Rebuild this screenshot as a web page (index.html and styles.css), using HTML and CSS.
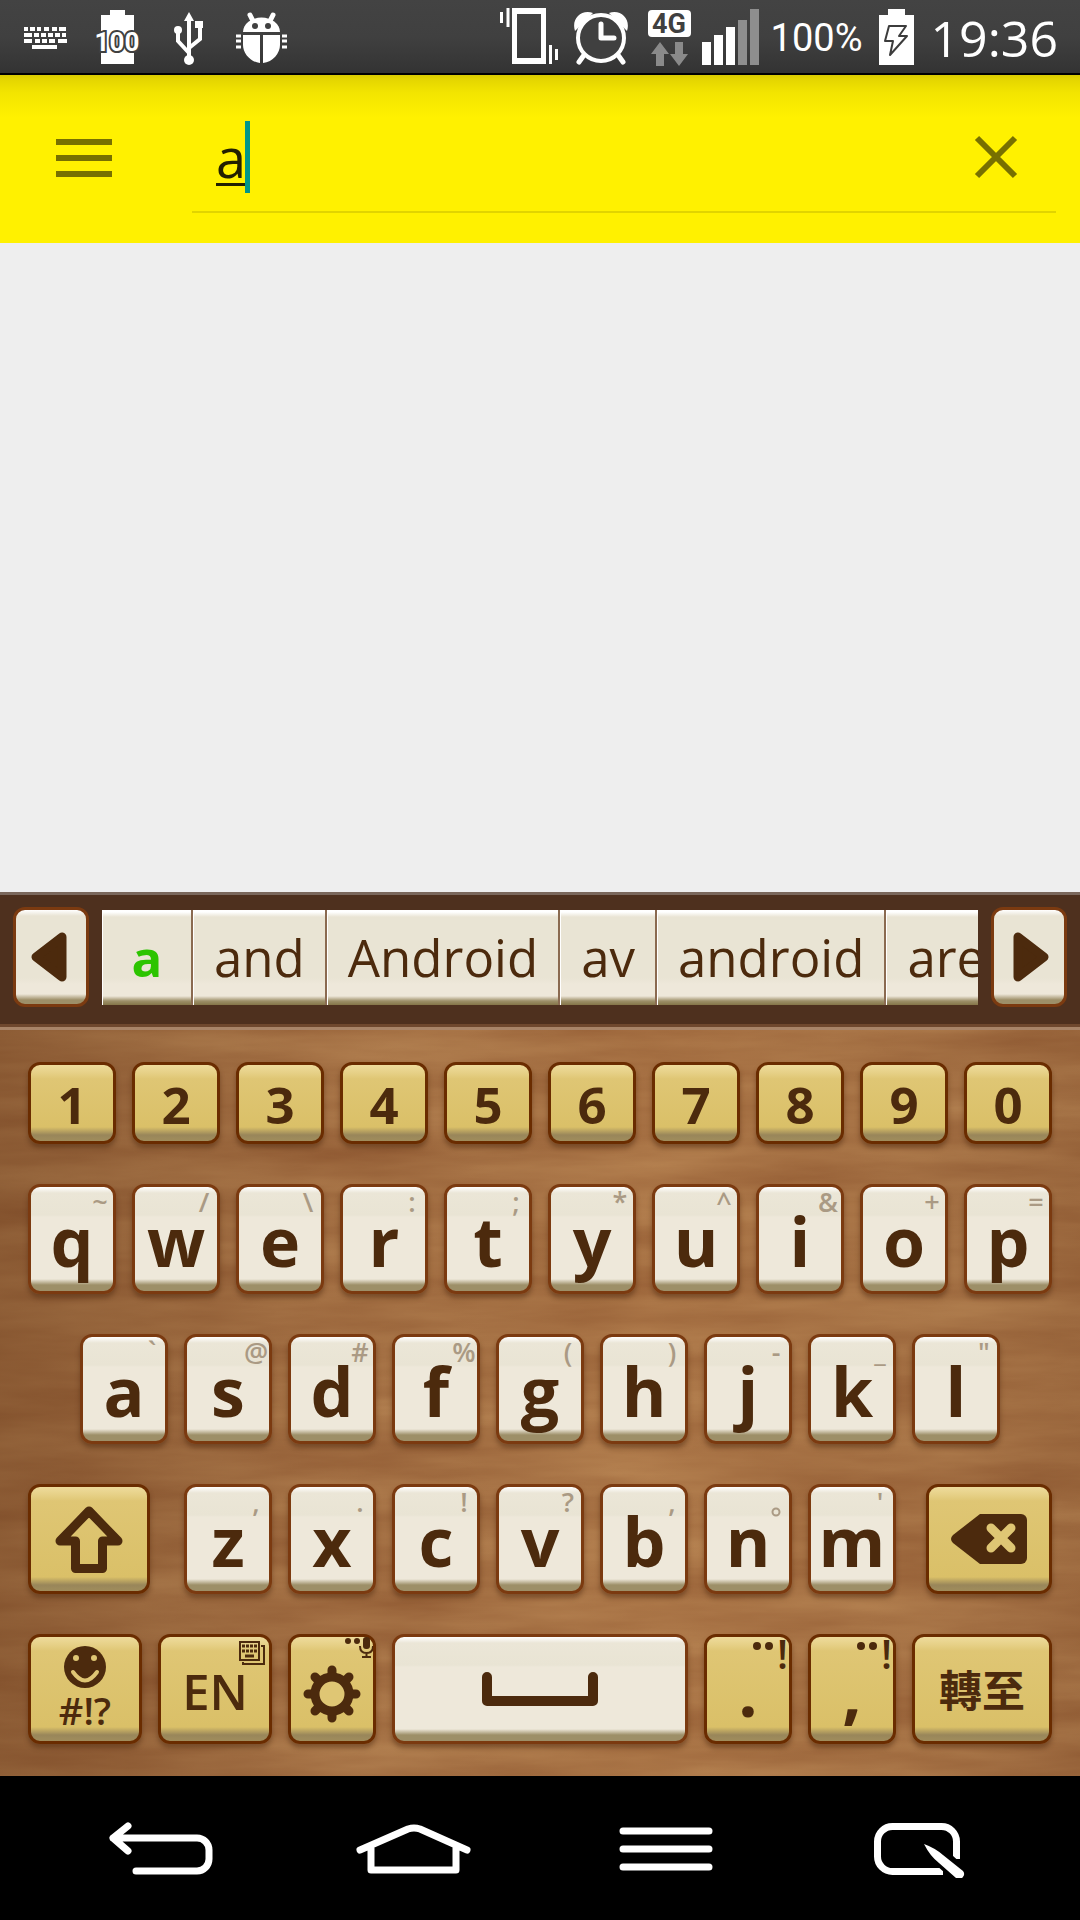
FILE: index.html
```html
<!DOCTYPE html>
<html lang="en">
<head>
<meta charset="utf-8">
<meta name="viewport" content="width=device-width, initial-scale=1">
<title>Search</title>
<link rel="stylesheet" href="styles.css">
</head>
<body>
<div class="status">
  <div class="status-left">
    <svg width="72" height="73" viewBox="0 0 72 73" fill="none" stroke="#fff" stroke-width="4" aria-hidden="true">
      <path d="M15 29h4m2 0h5m2 0h4m3 0h5m3 0h5m2 0h7M15 35h8m2 0h5m2 0h5m2 0h5m2 0h5m2 0h4M15 41h8m3 0h5m2 0h5m2 0h6m3 0h9M23 47h25"/>
    </svg>
    <svg width="72" height="73" viewBox="0 0 72 73" aria-hidden="true">
      <path d="M20 15h9v-5h15v5h9v49H20z" fill="#fff"/>
      <text x="36" y="51" class="battery-level">100</text>
    </svg>
    <svg width="72" height="73" viewBox="0 0 72 73" aria-hidden="true">
      <path d="M36 20v40M25 31v10l11 12M47 26v13L36 48" fill="none" stroke="#fff" stroke-width="4"/>
      <path d="M36 12l5 9H31z M42 21h8v7h-8z" fill="#fff"/>
      <circle cx="25" cy="30" r="4" fill="#fff"/><circle cx="36" cy="60" r="5" fill="#fff"/>
    </svg>
    <svg width="72" height="73" viewBox="0 0 72 73" aria-hidden="true">
      <path d="M25 15l4 8M48 15l-4 8" stroke="#fff" stroke-width="5" stroke-linecap="round"/>
      <path d="M18 32a18 14 0 0 1 37 0z" fill="#fff"/>
      <circle cx="30" cy="26" r="3" fill="#404040"/><circle cx="43" cy="26" r="3" fill="#404040"/>
      <path d="M18 35h17v28C25 62 18 53 18 45zM38 35h17v10c0 8-7 17-17 18z" fill="#fff"/>
      <path d="M11 36h5m-5 5h5m-5 6h5M57 36h5m-5 5h5m-5 6h5" stroke="#fff" stroke-width="3"/>
    </svg>
  </div>
  <div class="status-right">
    <svg width="64" height="73" viewBox="0 0 64 73" fill="none" stroke="#fff" aria-hidden="true">
      <path d="M3.500 12v11M10 8v19M52.500 45v19M58.500 49v11" stroke-width="3"/>
      <path fill="#fff" stroke="none" fill-rule="evenodd" d="M14 8h34v56H14zM19 14v44h24V14z"/>
    </svg>
    <svg width="58" height="73" viewBox="0 0 58 73" fill="none" stroke="#fff" stroke-linecap="round" aria-hidden="true">
      <path d="M12 55l-5 7M46 55l5 7" stroke-width="5"/>
      <path d="M3 31C-1 19 9 9 21 13zM55 31C59 19 49 9 37 13z" fill="#fff" stroke="none"/>
      <circle cx="29" cy="38" r="23" stroke-width="4" fill="#404040"/>
      <path d="M29 24v14h13" stroke-width="5" stroke-linejoin="round"/>
    </svg>
    <svg width="52" height="73" viewBox="0 0 52 73" aria-hidden="true">
      <rect x="8" y="10" width="43" height="27" rx="4" fill="#fff"/>
      <text x="29" y="33" class="network">4G</text>
      <path d="M20 42l9 12h-5v12h-8V54h-5zM35 42h8v12h5l-9 12-9-12h5z" fill="#8a8a8a"/>
    </svg>
    <svg width="59" height="73" viewBox="0 0 59 73" aria-hidden="true">
      <path d="M0 42h9v23H0zM12 35h9v30h-9zM24 27h9v38h-9z" fill="#fff"/>
      <path d="M36 20h9v45h-9zM48 9h9v56h-9z" fill="#8e8e8e"/>
    </svg>
    <span class="percent">100%</span>
    <svg width="48" height="73" viewBox="0 0 48 73" aria-hidden="true">
      <path d="M6 15h9V9h17v6h9v50H6z" fill="#fff"/>
      <path d="M16 26h17l-7 10h8L17 55l3-14h-8z" fill="#fff" stroke="#3c3c3c" stroke-width="2" stroke-linejoin="round"/>
    </svg>
    <time class="clock">19:36</time>
  </div>
</div>

<header class="search">
  <button class="menu" type="button" aria-label="Menu">
    <svg width="56" height="38" viewBox="0 0 56 38"><path d="M0 3h56M0 19h56M0 35h56" stroke="#777000" stroke-width="6"/></svg>
  </button>
  <div class="field">
    <div class="entry">
      <input class="query" type="text" value="a" aria-label="Search">
      <span class="caret"></span>
    </div>
    <button class="clear" type="button" aria-label="Clear">
      <svg width="44" height="44" viewBox="0 0 44 44"><path d="M3 3l38 38M41 3L3 41" stroke="#777000" stroke-width="6"/></svg>
    </button>
  </div>
</header>

<main class="results"></main>

<section class="suggest">
  <button class="arrow" type="button" aria-label="Previous suggestions">
    <svg width="36" height="50" viewBox="2 0 36 50" overflow="visible"><path d="M5 25L31 5v40z" fill="#4c2a0d" stroke="#4c2a0d" stroke-width="9" stroke-linejoin="round"/></svg>
  </button>
  <div class="words">
    <button class="word current" type="button">a</button>
    <button class="word" type="button">and</button>
    <button class="word" type="button">Android</button>
    <button class="word" type="button">av</button>
    <button class="word" type="button">android</button>
    <button class="word" type="button">are</button>
  </div>
  <button class="arrow" type="button" aria-label="Next suggestions">
    <svg width="36" height="50" viewBox="-2 0 36 50" overflow="visible"><path d="M31 25L5 5v40z" fill="#4c2a0d" stroke="#4c2a0d" stroke-width="9" stroke-linejoin="round"/></svg>
  </button>
</section>

<section class="keyboard">
  <svg class="wood" width="100%" height="100%" aria-hidden="true">
    <filter id="grain" x="0" y="0" width="100%" height="100%" color-interpolation-filters="sRGB">
      <feTurbulence type="fractalNoise" baseFrequency=".004 .03" numOctaves="5" seed="8"/>
      <feColorMatrix values=".16 0 0 0 .57  .18 0 0 0 .355  .14 0 0 0 .2  0 0 0 0 1"/>
    </filter>
    <linearGradient id="shade">
      <stop offset="0" stop-color="#5a3014" stop-opacity=".35"/>
      <stop offset=".3" stop-color="#5a3014" stop-opacity=".05"/>
      <stop offset=".6" stop-color="#d09050" stop-opacity=".08"/>
      <stop offset="1" stop-color="#5a3014" stop-opacity=".12"/>
    </linearGradient>
    <rect width="100%" height="100%" filter="url(#grain)"/>
    <rect width="100%" height="100%" fill="url(#shade)"/>
  </svg>

  <div class="row">
    <button class="key gold num" type="button">1</button>
    <button class="key gold num" type="button">2</button>
    <button class="key gold num" type="button">3</button>
    <button class="key gold num" type="button">4</button>
    <button class="key gold num" type="button">5</button>
    <button class="key gold num" type="button">6</button>
    <button class="key gold num" type="button">7</button>
    <button class="key gold num" type="button">8</button>
    <button class="key gold num" type="button">9</button>
    <button class="key gold num" type="button">0</button>
  </div>

  <div class="row">
    <button class="key" type="button">q<span class="alt">~</span></button>
    <button class="key" type="button">w<span class="alt">/</span></button>
    <button class="key" type="button">e<span class="alt">\</span></button>
    <button class="key" type="button">r<span class="alt">:</span></button>
    <button class="key" type="button">t<span class="alt">;</span></button>
    <button class="key" type="button">y<span class="alt">*</span></button>
    <button class="key" type="button">u<span class="alt">^</span></button>
    <button class="key" type="button">i<span class="alt">&amp;</span></button>
    <button class="key" type="button">o<span class="alt">+</span></button>
    <button class="key" type="button">p<span class="alt">=</span></button>
  </div>

  <div class="row inset">
    <button class="key" type="button">a<span class="alt">`</span></button>
    <button class="key" type="button">s<span class="alt">@</span></button>
    <button class="key" type="button">d<span class="alt">#</span></button>
    <button class="key" type="button">f<span class="alt">%</span></button>
    <button class="key" type="button">g<span class="alt">(</span></button>
    <button class="key" type="button">h<span class="alt">)</span></button>
    <button class="key" type="button">j<span class="alt">-</span></button>
    <button class="key" type="button">k<span class="alt">_</span></button>
    <button class="key" type="button">l<span class="alt">"</span></button>
  </div>

  <div class="row">
    <button class="key gold shift" type="button" aria-label="Shift">
      <svg width="70" height="70" viewBox="0 0 70 70"><path d="M35 7L6 37h15.500v27.500h27V37H64z" fill="none" stroke="#4c2a0d" stroke-width="9" stroke-linejoin="round"/></svg>
    </button>
    <button class="key" type="button">z<span class="alt">,</span></button>
    <button class="key" type="button">x<span class="alt">.</span></button>
    <button class="key" type="button">c<span class="alt">!</span></button>
    <button class="key" type="button">v<span class="alt">?</span></button>
    <button class="key" type="button">b<span class="alt">,</span></button>
    <button class="key" type="button">n<span class="alt">
      <svg width="10" height="10" viewBox="0 0 10 10"><circle cx="5" cy="5" r="3.500" fill="none" stroke="#aa9a84" stroke-width="2"/></svg></span></button>
    <button class="key" type="button">m<span class="alt">'</span></button>
    <button class="key gold erase" type="button" aria-label="Backspace">
      <svg width="76" height="50" viewBox="0 0 76 50">
        <path d="M29 0h41a6 6 0 0 1 6 6v38a6 6 0 0 1-6 6H29L2 29q-4-4 0-8z" fill="#4c2a0d"/>
        <path d="M40 14l20 20M60 14L40 34" stroke="#dfc674" stroke-width="9" stroke-linecap="round"/>
      </svg>
    </button>
  </div>

  <div class="row">
    <button class="key gold symbols" type="button">
      <svg width="42" height="42" viewBox="0 0 42 42">
        <circle cx="21" cy="21" r="21" fill="#4c2a0d"/>
        <circle cx="12" cy="12" r="3" fill="#dfc674"/><circle cx="30" cy="12" r="3" fill="#dfc674"/>
        <path d="M9 26q12 17 24 0" fill="none" stroke="#dfc674" stroke-width="4" stroke-linecap="round"/>
      </svg>
      <span>#!?</span>
    </button>
    <button class="key gold lang" type="button">EN
      <svg class="corner" width="26" height="24" viewBox="0 0 26 24" fill="none" stroke="#4c2a0d">
        <path d="M1 1h19v18H1zM22 5h3v18H4v-2" stroke-width="2"/>
        <path d="M3 5h15M3 10h15" stroke-width="3" stroke-dasharray="3 1"/><path d="M6 15h9" stroke-width="3"/>
      </svg>
    </button>
    <button class="key gold" type="button" aria-label="Settings">
      <svg class="gear" width="58" height="58" viewBox="-29 -29 58 58">
        <path d="M0-24V24M-24 0H24M-17-17l34 34M17-17l-34 34" stroke="#4c2a0d" stroke-width="9" stroke-linecap="round"/>
        <circle r="17" fill="#dfc674" stroke="#4c2a0d" stroke-width="9"/>
      </svg>
      <svg class="voice" width="28" height="22" viewBox="0 0 28 22" fill="#4c2a0d">
        <circle cx="3" cy="4" r="3"/><circle cx="12" cy="4" r="3"/><rect x="18" y="0" width="7" height="12" rx="3"/>
        <path d="M15 9q0 7 6.500 7T28 9M21.500 16v4M17 20h9" fill="none" stroke="#4c2a0d" stroke-width="2"/>
      </svg>
    </button>
    <button class="key space" type="button" aria-label="Space">
      <svg width="116" height="34" viewBox="0 0 116 34"><path d="M5 5v24h106V5" fill="none" stroke="#4c2a0d" stroke-width="10" stroke-linecap="round" stroke-linejoin="round"/></svg>
    </button>
    <button class="key gold" type="button">.<span class="marks"><i class="dot"></i><i class="dot"></i>!</span></button>
    <button class="key gold" type="button">,<span class="marks"><i class="dot"></i><i class="dot"></i>!</span></button>
    <button class="key gold goto" type="button" lang="zh-Hant">轉至</button>
  </div>
</section>

<nav class="navbar">
  <button class="nav" type="button" aria-label="Back">
    <svg width="120" height="60" viewBox="0 0 120 60"><path d="M35 53h61a12 12 0 0 0 12-12v-9a12 12 0 0 0-12-12H12M27 8L12 20l15 13"/></svg>
  </button>
  <button class="nav" type="button" aria-label="Home">
    <svg width="120" height="60" viewBox="0 0 120 60"><path d="M6 32l48-21q6-2 12 0l47 21M17 30v22h85V30"/></svg>
  </button>
  <button class="nav" type="button" aria-label="Options">
    <svg width="120" height="60" viewBox="0 0 120 60"><path d="M17 13h86M17 31h86M17 49h86"/></svg>
  </button>
  <button class="nav" type="button" aria-label="Quick memo">
    <svg width="120" height="60" viewBox="0 0 120 60">
      <path d="M84 53.500H33.500a15 15 0 0 1-15-15v-15a15 15 0 0 1 15-15h49a15 15 0 0 1 15 15V41" stroke-linecap="butt"/>
      <path d="M76 34l28 25" stroke="#000" stroke-width="18"/>
      <path d="M65 26q11 4 19 11l20 16a5 5 0 0 1-7 7L80 45q-9-7-15-19z" fill="#fff" stroke="none"/>
    </svg>
  </button>
</nav>
</body>
</html>
```
FILE: styles.css
```css
* { box-sizing: border-box; }

body {
  margin: 0;
  min-height: 100vh;
  display: flex;
  flex-direction: column;
  background: #eee;
  font-family: "Open Sans", "Noto Sans CJK TC", sans-serif;
  color: #4c2a0d;
}

button {
  margin: 0;
  padding: 0;
  border: 0;
  background: none;
  font: inherit;
  color: inherit;
}

svg { display: block; flex: none; }

/* status bar */
.status {
  height: 75px;
  display: flex;
  justify-content: space-between;
  border-bottom: 2px solid #000;
  background: linear-gradient(#434343, #404040 50%, #333);
  color: #fff;
}
.status-left { display: flex; padding-left: 9px; }
.status-right { display: flex; gap: 10px; padding-right: 22px; }
.battery-level {
  font: 700 26px Roboto, sans-serif;
  text-anchor: middle;
  fill: #fff;
  stroke: #404040;
  stroke-width: 4px;
  paint-order: stroke;
}
.network {
  font: 700 27px Roboto, sans-serif;
  text-anchor: middle;
  fill: #404040;
}
.percent { font-family: Roboto, sans-serif; font-size: 38px; line-height: 76px; }
.clock { font-size: 50px; line-height: 76px; }

/* search bar */
.search {
  height: 168px;
  display: flex;
  padding-right: 24px;
  background: linear-gradient(#d9ca00, #e4d500 4px, #f3e500 18px, #fff100 42px);
}
.menu { width: 192px; padding: 0 0 2px 56px; }
.field {
  flex: 1;
  display: flex;
  align-items: center;
  margin-bottom: 30px;
  padding: 28px 38px 0 0;
  border-bottom: 2px solid #e1d400;
}
.entry { position: relative; flex: 1; }
.query {
  width: 100%;
  height: 72px;
  padding: 0 0 0 24px;
  border: 0;
  outline: 0;
  background: none;
  font: inherit;
  font-size: 54px;
  color: #222000;
  text-decoration: underline 3px;
  text-underline-offset: 5px;
}
.caret {
  position: absolute;
  left: 53px;
  top: 0;
  width: 5px;
  height: 72px;
  background: #009688;
}

.results { flex: 1; }

/* word suggestions */
.suggest {
  height: 138px;
  display: flex;
  align-items: center;
  gap: 13px;
  padding: 0 13px 8px;
  border-top: 3px solid #7a675c;
  border-bottom: 3px solid #a88468;
  background: linear-gradient(#4e301e 129px, #6f482e 129px);
}
.arrow {
  width: 76px;
  height: 100px;
  display: grid;
  place-items: center;
  border: 3px solid #7b3a10;
  border-radius: 12px;
  background: linear-gradient(#fff, #e9e4d4 6px, #e9e4d4 68px, #eee8da 74px, #eee8da 84px, #9d8f68 90px);
}
.words {
  flex: 1;
  display: flex;
  height: 95px;
  overflow: hidden;
  background: linear-gradient(#fff 2px, #e9e4d4 7px, #e9e4d4 68px, #eee8da 74px, #eee8da 86px, #9d8f68 91px, #857548);
}
.word {
  flex: none;
  min-width: 91px;
  padding: 0 20px;
  border-left: 1px solid #fff;
  border-right: 2px solid #8a6a50;
  font-size: 51px;
  line-height: 76px;
}
.current { font-weight: 700; color: #2cc400; }

/* keyboard: a key's flex-grow is its share of the row, less its border */
.keyboard {
  position: relative;
  display: flex;
  flex-direction: column;
  gap: 40px;
  padding: 32px 28px;
  background: #a47044;
}
.wood { position: absolute; left: 0; top: 0; }
.row { position: relative; display: flex; gap: 16px; }
.inset { padding: 0 52px; }
.key {
  position: relative;
  flex: 82 1 0;
  min-width: 0;
  height: 110px;
  display: flex;
  align-items: center;
  justify-content: center;
  border: 3px solid #7b3a10;
  border-radius: 12px;
  background: linear-gradient(#fff, #ebe6d7 6px, #e9e4d4 28px, #eee8da 30px, #eee8da 92px, #9d8f68 98px);
  box-shadow: 0 4px 5px rgba(70, 35, 10, .45);
  padding-top: 4px;
  font-size: 68px;
  font-weight: 700;
  line-height: 92px;
}
.gold {
  border-color: #6a2c00;
  background: linear-gradient(#eedb9c, #e6d086 8px, #dfc674 14px, #dac068 calc(100% - 14px), #99865a calc(100% - 6px), #a08d5c);
}
.num { height: 82px; padding-top: 2px; font-size: 51px; line-height: 70px; }
.alt {
  position: absolute;
  top: 0;
  right: 0;
  width: 26px;
  display: flex;
  justify-content: center;
  font-size: 27px;
  font-weight: 600;
  line-height: 30px;
  color: #aa9a84;
}
.alt svg { margin-top: 20px; }
.shift { flex-grow: 116; margin-right: 18px; padding: 0; }
.erase { flex-grow: 120; margin-left: 14px; padding: 0; }
.symbols {
  flex-grow: 108;
  flex-direction: column;
  padding: 0;
  font-size: 38px;
  font-weight: 600;
  line-height: 44px;
}
.lang { flex-grow: 108; font-size: 49px; font-weight: 600; }
.space { flex-grow: 290; padding: 0; }
.goto { flex-grow: 134; font-size: 43px; font-weight: 700; }
.corner { position: absolute; top: 4px; right: 4px; }
.gear { margin-top: 6px; }
.voice { position: absolute; top: 0; right: 0; }
.marks {
  position: absolute;
  top: 0;
  right: 1px;
  display: flex;
  gap: 4px;
  font-size: 40px;
  font-weight: 600;
  line-height: 34px;
}
.dot { width: 8px; height: 8px; margin-top: 5px; border-radius: 50%; background: #4c2a0d; }

/* system navigation */
.navbar { height: 144px; display: flex; padding: 0 35px; background: #000; }
.nav { flex: 1; display: grid; place-items: center; }
.nav svg {
  fill: none;
  stroke: #fff;
  stroke-width: 7px;
  stroke-linecap: round;
  stroke-linejoin: round;
}
```
